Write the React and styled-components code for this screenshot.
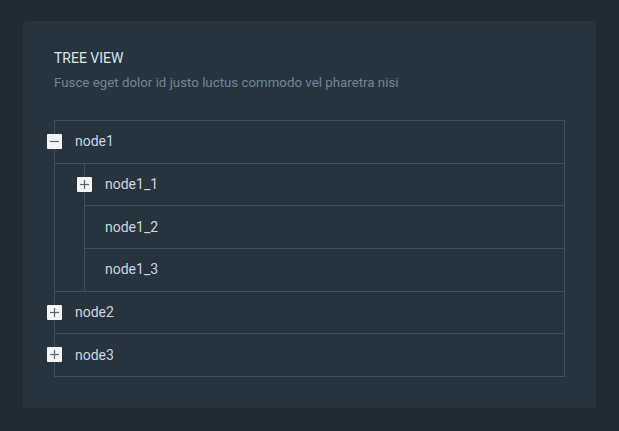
import React, { useState } from "react";
import styled, { createGlobalStyle } from "styled-components";

const GlobalStyle = createGlobalStyle`
  body {
    margin: 0;
    background: #1f2a32;
    font-family: Roboto, "Liberation Sans", sans-serif;
  }
`;

const Page = styled.div`
  padding: 21px 23px 23px;
`;

const Card = styled.section`
  background: #27343e;
  border-radius: 3px;
  padding: 27px 31px 31px;
`;

const Title = styled.h2`
  margin: 0;
  font-size: 14px;
  font-weight: 400;
  line-height: 21px;
  color: #dbe5ec;
`;

const Subtitle = styled.p`
  margin: 4px 0 0;
  font-size: 13.3px;
  line-height: 20px;
  color: #6e8596;
`;

const TreeRoot = styled.ul`
  list-style: none;
  margin: 27px 0 0;
  padding: 0;
  border: 1px solid #3a5162;
`;

const Children = styled.ul`
  list-style: none;
  margin: 0 0 0 29px;
  padding: 0;
  border-left: 1px solid #3a5162;
`;

const Item = styled.li`
  border-top: ${({ $first }) => ($first ? "none" : "1px solid #3a5162")};
`;

const Row = styled.div`
  position: relative;
  display: flex;
  align-items: center;
  height: 41.67px;
  padding-left: 20px;
  padding-bottom: 1px;
  box-sizing: border-box;
  height: ${({ $divided }) => ($divided ? "42.67px" : "41.67px")};
  border-bottom: ${({ $divided }) => ($divided ? "1px solid #3a5162" : "none")};
  font-size: 14px;
  color: #ccd6de;
`;

const Toggle = styled.button`
  position: absolute;
  left: -8px;
  top: 13px;
  width: 15px;
  height: 15px;
  padding: 0;
  border: none;
  border-radius: 1px;
  background: #f2f4f6;
  display: flex;
  align-items: center;
  justify-content: center;
  cursor: pointer;

  svg {
    display: block;
  }
`;

const tree = [
  {
    id: "node1",
    children: [{ id: "node1_1", children: [{ id: "node1_1_1" }] }, { id: "node1_2" }, { id: "node1_3" }],
  },
  { id: "node2", children: [{ id: "node2_1" }] },
  { id: "node3", children: [{ id: "node3_1" }] },
];

function Icon({ open }) {
  return (
    <svg width="11" height="11" viewBox="0 0 11 11">
      <path d="M1 5.5h9" stroke="#5f6468" strokeWidth="1.2" />
      {!open && <path d="M5.5 1v9" stroke="#5f6468" strokeWidth="1.2" />}
    </svg>
  );
}

function Node({ node, first, open, onToggle, openMap }) {
  const hasKids = node.children && node.children.length > 0;
  const expanded = hasKids && open;
  return (
    <Item $first={first}>
      <Row $divided={expanded}>
        {hasKids && (
          <Toggle onClick={() => onToggle(node.id)}>
            <Icon open={open} />
          </Toggle>
        )}
        {node.id}
      </Row>
      {expanded && (
        <Children>
          {node.children.map((c, i) => (
            <Node
              key={c.id}
              node={c}
              first={i === 0}
              open={!!openMap[c.id]}
              onToggle={onToggle}
              openMap={openMap}
            />
          ))}
        </Children>
      )}
    </Item>
  );
}

export default function App() {
  const [openMap, setOpenMap] = useState({ node1: true });
  const toggle = (id) => setOpenMap((m) => ({ ...m, [id]: !m[id] }));

  return (
    <Page>
      <GlobalStyle />
      <Card>
        <Title>TREE VIEW</Title>
        <Subtitle>Fusce eget dolor id justo luctus commodo vel pharetra nisi</Subtitle>
        <TreeRoot>
          {tree.map((n, i) => (
            <Node key={n.id} node={n} first={i === 0} open={!!openMap[n.id]} onToggle={toggle} openMap={openMap} />
          ))}
        </TreeRoot>
      </Card>
    </Page>
  );
}
